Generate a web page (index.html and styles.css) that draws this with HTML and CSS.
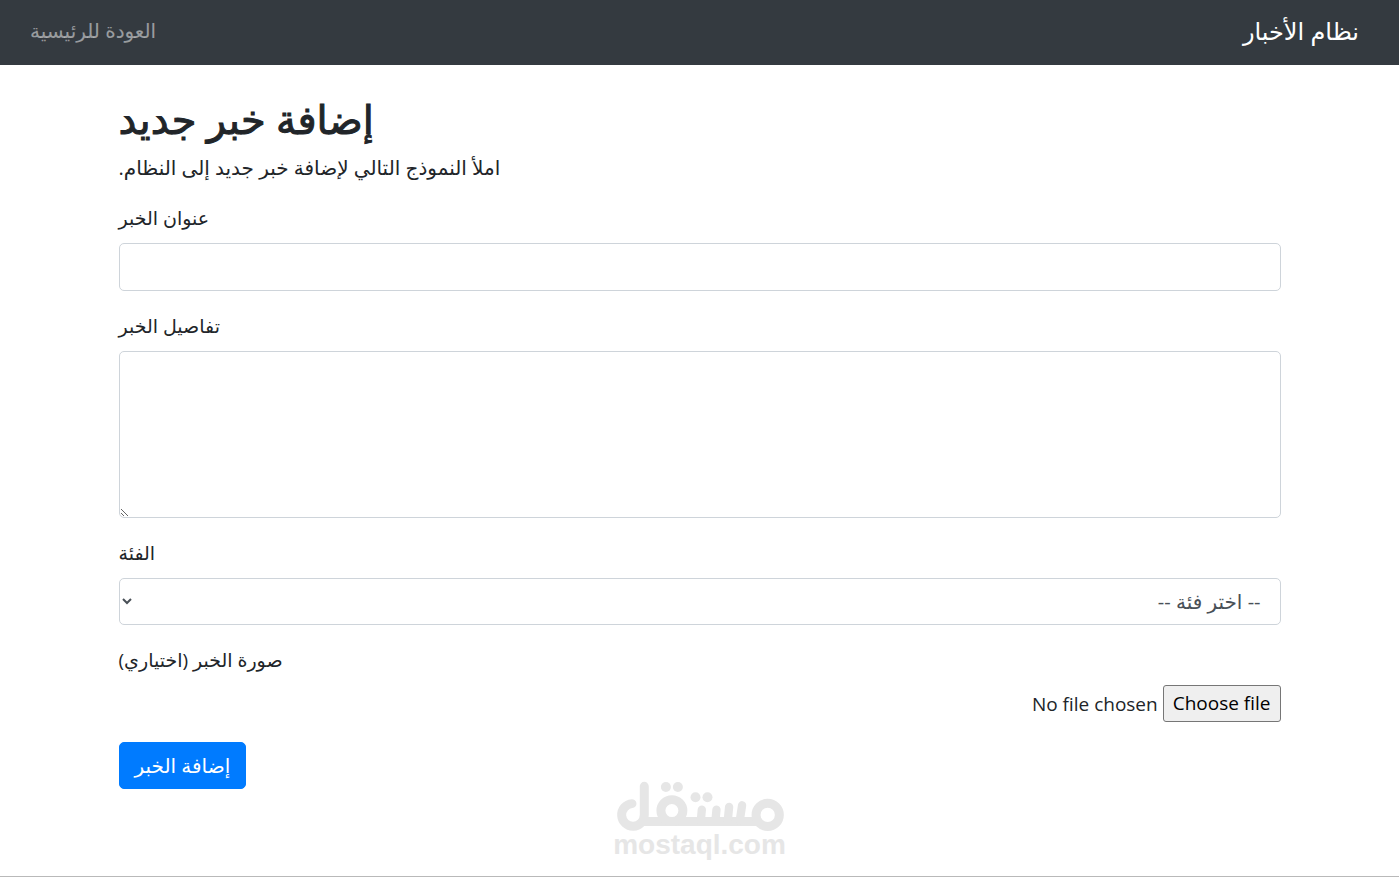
FILE: index.html
```html
<!DOCTYPE html>
<html lang="ar">
<head>
  <meta charset="UTF-8">
  <meta name="viewport" content="width=device-width, initial-scale=1">
  <title>إضافة خبر جديد</title>
  <link rel="stylesheet" href="styles.css">
</head>
<body dir="rtl">
  <nav class="navbar">
    <a class="navbar-brand" href="#">نظام الأخبار</a>
    <a class="nav-link" href="#">العودة للرئيسية</a>
  </nav>

  <main class="container">
    <h1>إضافة خبر جديد</h1>
    <p class="lead">املأ النموذج التالي لإضافة خبر جديد إلى النظام.</p>

    <form action="#" method="post" enctype="multipart/form-data">
      <div class="form-group">
        <label for="title">عنوان الخبر</label>
        <input type="text" class="form-control" id="title" name="title">
      </div>
      <div class="form-group">
        <label for="details">تفاصيل الخبر</label>
        <textarea class="form-control" id="details" name="details" rows="5"></textarea>
      </div>
      <div class="form-group">
        <label for="category">الفئة</label>
        <select class="form-control" id="category" name="category">
          <option value="">-- اختر فئة --</option>
        </select>
      </div>
      <div class="form-group">
        <label for="image">صورة الخبر (اختياري)</label>
        <div class="file-field">
          <input type="file" class="file-input" id="image" name="image">
          <label class="file-button" for="image">Choose file</label>
          <span class="file-name">No file chosen</span>
        </div>
      </div>
      <button type="submit" class="btn">إضافة الخبر</button>
    </form>
  </main>

  <div class="watermark">
    <svg class="watermark-logo" viewBox="45 33 505 152" aria-hidden="true">
      <g fill="none" stroke="#e6e6e6" stroke-width="27" stroke-linecap="round">
        <path d="M93 101A34 34 0 1 0 130 135V49"/>
        <path d="M128 155H472"/>
        <circle cx="213" cy="122" r="33"/>
        <circle cx="501" cy="135" r="35"/>
        <path stroke-width="25" d="M303 119L300 152M347 119L344 152M385 111L381 152M424 106L417 152"/>
      </g>
      <g fill="#e6e6e6">
        <circle cx="195" cy="51" r="15"/>
        <circle cx="231" cy="51" r="15"/>
        <circle cx="284" cy="82" r="15"/>
        <circle cx="320" cy="82" r="15"/>
      </g>
    </svg>
    <span class="watermark-text">mostaql.com</span>
  </div>
</body>
</html>
```
FILE: styles.css
```css
* {
  box-sizing: border-box;
}

body {
  position: relative;
  margin: 0;
  min-height: 100vh;
  font-family: "Open Sans", "DejaVu Sans", sans-serif;
  font-size: 20px;
  line-height: 30px;
  color: #212529;
  background-color: #fff;
  text-align: left;
  border-bottom: 1px solid #b9b9b9;
}

.navbar {
  display: flex;
  justify-content: space-between;
  align-items: center;
  height: 65px;
  padding: 0 20px 4px;
  background-color: #343a40;
}

.navbar a {
  text-decoration: none;
}

.navbar-brand {
  margin-right: 20px;
  font-size: 24px;
  color: #fff;
}

.nav-link {
  padding: 0 10px;
  color: rgba(255, 255, 255, 0.5);
}

.container {
  max-width: 1202px;
  margin: 0 auto;
  padding: 30px 20px;
}

h1 {
  margin: 0 0 10px;
  font-size: 40px;
  font-weight: 500;
  line-height: 48px;
  -webkit-text-stroke: 1px #212529;
}

.lead {
  margin: 0 0 20px;
}

.form-group {
  margin-bottom: 20px;
}

.form-group > label {
  display: block;
  margin-bottom: 10px;
  font-size: 19px;
}

.form-control {
  display: block;
  width: 100%;
  height: 48px;
  padding: 8px 15px;
  font: inherit;
  color: #495057;
  background-color: #fff;
  border: 1px solid #ced4da;
  border-radius: 5px;
}

select.form-control {
  height: 47px;
}

textarea.form-control {
  height: 167px;
  resize: vertical;
}

.file-field {
  position: relative;
  display: flex;
  align-items: center;
  gap: 5px;
  font-size: 19px;
}

.file-input {
  position: absolute;
  width: 1px;
  height: 1px;
  opacity: 0;
}

.file-button {
  padding: 3px 9px;
  line-height: 29px;
  color: #000;
  background-color: #efefef;
  border: 1px solid #767676;
  border-radius: 3px;
}

.btn {
  display: block;
  height: 47px;
  margin-right: auto;
  padding: 0 15px;
  font: inherit;
  color: #fff;
  background-color: #007bff;
  border: 1px solid #007bff;
  border-radius: 5px;
  cursor: pointer;
}

/* floats over the bottom of the page */
.watermark {
  position: absolute;
  right: 0;
  bottom: 18px;
  left: 0;
  display: flex;
  flex-direction: column;
  align-items: center;
  pointer-events: none;
}

.watermark-logo {
  width: 168px;
}

.watermark-text {
  font-family: "Liberation Sans", Arial, sans-serif;
  font-size: 28px;
  font-weight: bold;
  line-height: 26px;
  color: #e6e6e6;
}
```
